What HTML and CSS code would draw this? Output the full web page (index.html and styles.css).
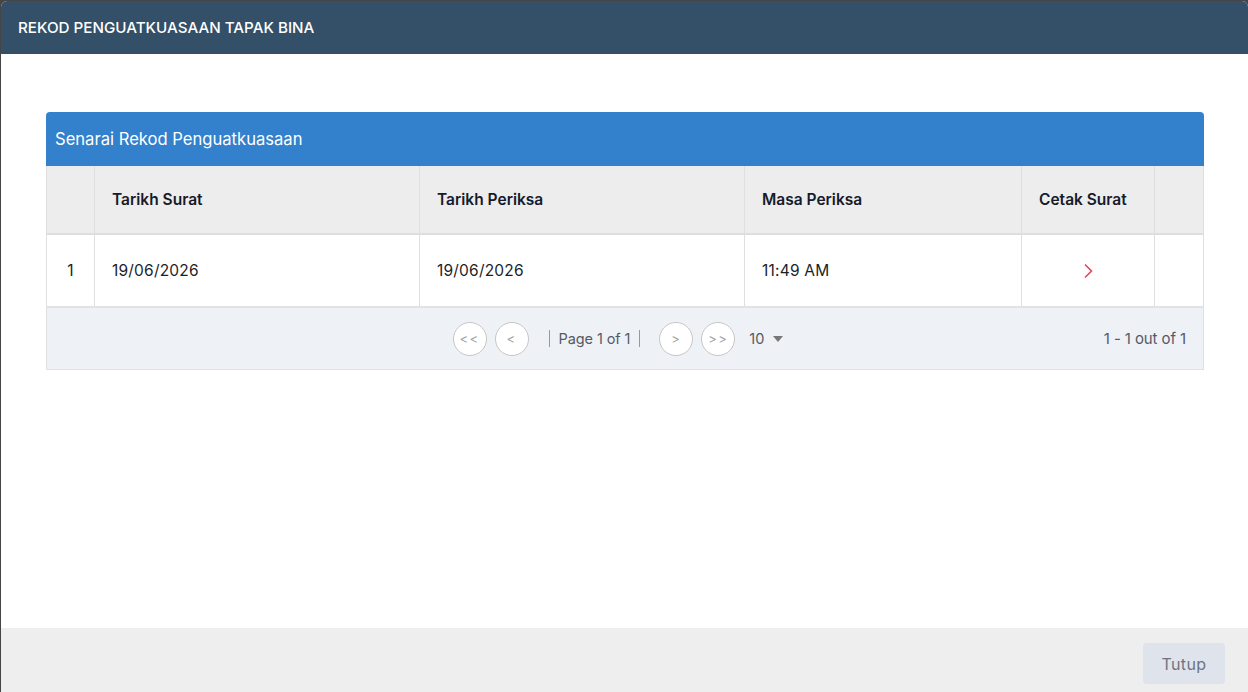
FILE: index.html
```html
<!DOCTYPE html>
<html>
<head>
<meta charset="utf-8">
<link rel="stylesheet" href="styles.css">
</head>
<body>
<div class="modal">
  <div class="modal-header">REKOD PENGUATKUASAAN TAPAK BINA</div>
  <div class="modal-body">
    <div class="card">
      <div class="card-header">Senarai Rekod Penguatkuasaan</div>
      <div class="grid head">
        <div class="cell"></div>
        <div class="cell">Tarikh Surat</div>
        <div class="cell">Tarikh Periksa</div>
        <div class="cell">Masa Periksa</div>
        <div class="cell">Cetak Surat</div>
        <div class="cell last"></div>
      </div>
      <div class="grid row">
        <div class="cell center">1</div>
        <div class="cell">19/06/2026</div>
        <div class="cell">19/06/2026</div>
        <div class="cell">11:49 AM</div>
        <div class="cell center">
          <svg class="chev" width="10" height="16" viewBox="0 0 10 16"><path d="M2 1.5 L8.5 8 L2 14.5" fill="none" stroke="#e0485e" stroke-width="1.6"/></svg>
        </div>
        <div class="cell last"></div>
      </div>
      <div class="pager">
        <div class="pager-mid">
          <span class="pbtn">&lt;&lt;</span>
          <span class="pbtn">&lt;</span>
          <span class="sep"></span>
          <span class="pinfo">Page 1 of 1</span>
          <span class="sep"></span>
          <span class="pbtn gapl">&gt;</span>
          <span class="pbtn">&gt;&gt;</span>
          <span class="size">10 <span class="tri"></span></span>
        </div>
        <div class="pcount">1 - 1 out of 1</div>
      </div>
    </div>
  </div>
  <div class="modal-footer">
    <button class="btn">Tutup</button>
  </div>
</div>
</body>
</html>
```
FILE: styles.css
```css
html, body {
  margin: 0;
  padding: 0;
  overflow: hidden;
}
body {
  background: #454545;
  font-family: "Inter", "Roboto", "Liberation Sans", sans-serif;
  color: #1c1e2a;
}
.modal {
  margin: 1px 0 0 1px;
  width: 1247px;
  border-radius: 6px 6px 0 0;
  overflow: hidden;
  background: #fff;
  display: flex;
  flex-direction: column;
}
.modal-header {
  height: 53px;
  background: #344f68;
  color: #fff;
  font-size: 15.2px;
  font-weight: 500;
  display: flex;
  align-items: center;
  padding-left: 17px;
}
.modal-body {
  height: 516px;
  padding: 58px 44px 0 45px;
}
.card {
  border-radius: 4px 4px 0 0;
  overflow: hidden;
}
.card-header {
  height: 54px;
  background: #3380cc;
  color: #fff;
  font-size: 16.6px;
  display: flex;
  align-items: center;
  padding-left: 9px;
}
.grid {
  display: grid;
  grid-template-columns: 48px 325px 325px 277px 133px 1fr;
  border-left: 1px solid #dfdfdf;
  border-right: 1px solid #dfdfdf;
}
.cell {
  border-right: 1px solid #dfdfdf;
  display: flex;
  align-items: center;
  padding-left: 17px;
  font-size: 15.5px;
  letter-spacing: 0.2px;
}
.cell.center {
  justify-content: center;
  padding-left: 0;
}
.cell.last {
  border-right: none;
}
.head {
  height: 69px;
  box-sizing: border-box;
  background: #ededed;
  border-bottom: 2px solid #dedede;
}
.head .cell {
  font-weight: 600;
  color: #161a2b;
  font-size: 15.5px;
  letter-spacing: 0;
}
.row {
  height: 73px;
  box-sizing: border-box;
  background: #fff;
  border-bottom: 2px solid #e2e2e2;
}
.chev {
  display: block;
}
.pager {
  height: 62px;
  box-sizing: border-box;
  background: #eef1f6;
  border-left: 1px solid #dfdfdf;
  border-right: 1px solid #dfdfdf;
  border-bottom: 1px solid #e2e2e2;
  display: flex;
  align-items: center;
  position: relative;
  justify-content: center;
}
.pager-mid {
  display: flex;
  align-items: center;
  margin-left: -14px;
  font-size: 14.5px;
  color: #555a66;
}
.pbtn {
  width: 32px;
  height: 32px;
  border: 1px solid #c9c5c5;
  border-radius: 50%;
  background: #fff;
  display: flex;
  align-items: center;
  justify-content: center;
  font-size: 13px;
  color: #a0a0a0;
  margin-right: 8px;
  letter-spacing: 1.5px;
}
.pbtn.gapl {
  margin-left: 10px;
}
.sep {
  width: 1px;
  height: 17px;
  background: #999;
  margin-left: 12px;
  margin-right: 9px;
}
.pinfo + .sep {
  margin-left: 9px;
}
.pinfo {
  letter-spacing: -0.1px;
}
.size {
  display: flex;
  align-items: center;
  margin-left: 6px;
  color: #555a66;
}
.tri {
  display: inline-block;
  width: 0;
  height: 0;
  border-left: 5px solid transparent;
  border-right: 5px solid transparent;
  border-top: 6px solid #777;
  margin-left: 9px;
}
.pcount {
  position: absolute;
  right: 17px;
  top: 0;
  bottom: 0;
  display: flex;
  align-items: center;
  font-size: 15px;
  color: #555a66;
  letter-spacing: -0.1px;
}
.modal-footer {
  height: 71px;
  background: #eeeeee;
  display: flex;
  justify-content: flex-end;
  padding: 15px 23px 0 0;
  box-sizing: border-box;
}
.btn {
  width: 82px;
  height: 41px;
  border: none;
  border-radius: 4px;
  background: #dfe4ec;
  color: #6c7480;
  font-family: "Inter", "Roboto", "Liberation Sans", sans-serif;
  font-size: 16px;
  letter-spacing: 0.4px;
}
```
